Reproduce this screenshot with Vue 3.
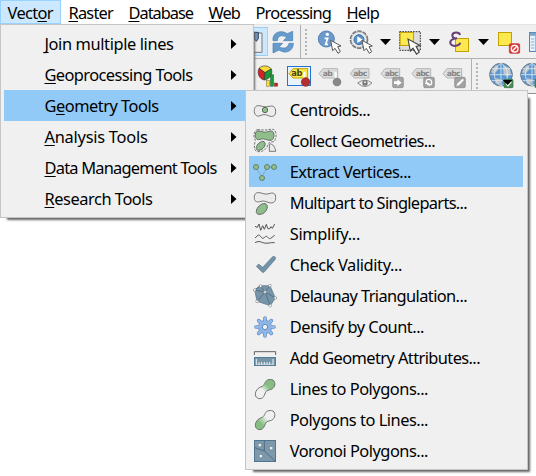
<script setup>
const bar = [
  { t: ['Vect', 'o', 'r'], w: 45, open: true },
  { t: ['', 'R', 'aster'], w: 44 },
  { t: ['', 'D', 'atabase'], w: 64 },
  { t: ['', 'W', 'eb'], w: 31 },
  { t: ['Pro', 'c', 'essing'], w: 75 },
  { t: ['', 'H', 'elp'], w: 32 },
]
const vector = [
  { t: ['', 'J', 'oin multiple lines'], w: 129 },
  { t: ['', 'G', 'eoprocessing Tools'], w: 148 },
  { t: ['G', 'e', 'ometry Tools'], w: 114, on: true },
  { t: ['', 'A', 'nalysis Tools'], w: 103 },
  { t: ['', 'D', 'ata Management Tools'], w: 172 },
  { t: ['', 'R', 'esearch Tools'], w: 108 },
]
const G = 'fill="#8fbd8c" stroke="#626a64" stroke-width="3"'
const W = 'fill="#ececec" stroke="#777" stroke-width="3"'
const dot = (x, y) => `<circle cx="${x}" cy="${y}" r="7.5" fill="#8fc08c" stroke="#64806a" stroke-width="3"/>`
const node = (x, y) => `<circle cx="${x}" cy="${y}" r="4" fill="#fff" stroke="#888" stroke-width="2"/>`
const tools = [
  { label: 'Centroids...', w: 81, y: 12, icon: `<path d="M42 47C31 46 27 55 28 65C29 78 39 81 48 76C57 72 63 74 70 77C84 83 92 77 92 65C92 50 84 46 72 49C60 53 53 48 42 47Z" ${W}/><circle cx="60" cy="60" r="8" fill="#8fc08c" stroke="#56705c" stroke-width="3"/>` },
  { label: 'Collect Geometries...', w: 146, y: 105, icon: `<path d="M39 119C25 120 24 142 31 151C28 164 25 176 34 184C48 188 63 181 68 166C70 158 76 155 86 155C94 151 96 126 88 120C79 114 70 121 60 120Z" fill="none" stroke="#555" stroke-width="2.5" stroke-dasharray="7 4"/><path d="M43 123C31 122 29 133 32 143C35 151 43 149 50 147C58 145 65 151 75 151C86 151 88 139 86 129C83 120 74 123 65 126C57 128 51 124 43 123Z" ${G}/><path d="M57 155C48 151 35 163 34 173C33 181 40 183 48 179C57 176 66 160 57 155Z" ${G}/><path d="M73 162V184H92C91 173 84 160 73 162Z" ${W}/>` },
  { label: 'Extract Vertices...', w: 122, y: 198, on: true, icon: `<path d="M36 238L48 257M62 239L53 256" stroke="#7294ac" stroke-width="3" stroke-dasharray="5 3"/><path d="M73 231H80" stroke="#7294ac" stroke-width="3"/>${dot(33, 231)}${dot(66, 231)}${dot(87, 231)}${dot(51, 264)}` },
  { label: 'Multipart to Singleparts...', w: 178, y: 291, icon: `<path d="M42 308C31 306 27 316 28 325C29 337 39 337 48 334C57 331 63 335 72 338C86 341 92 335 92 323C92 309 84 307 72 311C60 315 53 309 42 308Z" ${W}/><path d="M61 341C49 338 35 352 34 364C33 373 42 375 53 371C65 366 73 346 61 341Z" ${G}/>` },
  { label: 'Simplify...', w: 71, y: 9, icon: `<path d="M30 34L37 37L42 27L47 46L53 32L58 43L64 28L68 40L73 42L78 35L82 40L89 27" fill="none" stroke="#555" stroke-width="3"/><path d="M30 69L39 61C42 58 45 62 49 67C55 75 59 64 64 64C69 64 70 74 77 70L89 61" fill="none" stroke="#555" stroke-width="3"/><path d="M30 83C39 78 45 79 53 83C66 88 77 81 89 83" fill="none" stroke="#555" stroke-width="3"/>` },
  { label: 'Check Validity...', w: 113, y: 102, icon: `<path d="M34 154L41 147L53 157L84 124L91 126V133L57 172H52Z" fill="#7493a6" stroke="#587b91" stroke-width="2"/>` },
  { label: 'Delaunay Triangulation...', w: 178, y: 195, icon: `<path d="M29 225L46 212H75L91 249L76 272L36 259Z" fill="#7795a8" stroke="#557083" stroke-width="2"/><path d="M60 231L29 225L46 212L60 231L75 212M60 231L91 249M60 231L76 272M60 231L36 259" fill="none" stroke="#4f6a7d" stroke-width="2.5"/>${node(29, 225)}${node(47, 213)}${node(75, 212)}${node(60, 231)}${node(91, 249)}${node(76, 272)}${node(36, 259)}` },
  { label: 'Densify by Count...', w: 135, y: 288, icon: `<g stroke="#5b8cc8" stroke-width="11" stroke-linecap="round"><path d="M60 309V363M33 336H87M41 317L79 355M79 317L41 355"/></g><circle cx="60" cy="336" r="21" fill="#5b8cc8"/><g stroke="#97bbe8" stroke-width="7" stroke-linecap="round"><path d="M60 309V363M33 336H87M41 317L79 355M79 317L41 355"/></g><circle cx="60" cy="336" r="19" fill="#8eb4e3"/><circle cx="60" cy="336" r="8" fill="#efefef" stroke="#5b8cc8" stroke-width="3"/>` },
  { label: 'Add Geometry Attributes...', w: 191, y: -9, icon: `<path d="M28 30V20H92V30" fill="none" stroke="#626262" stroke-width="3"/><rect x="28.500" y="37.500" width="63" height="24" fill="#7795a8" stroke="#557c95" stroke-width="3"/><path d="M34 42V59M42 51V59M50 51V59M58 51V59M66 51V59M74 51V59M84 42V59" stroke="#eef2f5" stroke-width="3"/><path d="M33 58H87" stroke="#eef2f5" stroke-width="2"/>` },
  { label: 'Lines to Polygons...', w: 139, y: 84, icon: `<path d="M72 104C59 105 61 119 52 124C38 128 28 140 32 153C37 164 53 164 58 151C62 140 64 136 76 134C88 131 93 118 87 108C83 103 78 103 72 104Z" fill="url(#gu)" stroke="#6c756e" stroke-width="3"/>` },
  { label: 'Polygons to Lines...', w: 139, y: 177, icon: `<path d="M72 197C59 198 61 212 52 217C38 221 28 233 32 246C37 257 53 257 58 244C62 233 64 229 76 227C88 224 93 211 87 201C83 196 78 196 72 197Z" fill="url(#gd)" stroke="#6c756e" stroke-width="3"/>` },
  { label: 'Voronoi Polygons...', w: 139, y: 270, icon: `<rect x="28.500" y="286.500" width="63" height="63" fill="#7c98aa" stroke="#4f7590" stroke-width="3"/><path d="M58 288V318L29 308M58 318L91 349" fill="none" stroke="#4f6c82" stroke-width="3"/><path d="M41 297h7v7h-7zM75 306h7v7h-7zM44 330h7v7h-7z" fill="#f2eee5"/>` },
]

// Spread the glyphs so that each label takes its nominal width.
const vFit = {
  mounted(el, { value }) {
    const n = el.textContent.length
    el.style.letterSpacing = (value - el.getBoundingClientRect().width) / n + 'px'
  },
}

const cursor = 'M0 0L6 31L13 24L22 39L29 34L21 19L31 17Z'
const tag = 'M0 17L12 2H56V30H12Z'
</script>

<template>
  <div class="window">
    <nav class="menubar">
      <div v-for="m in bar" :key="m.t.join('')" class="top" :class="{ open: m.open }" :style="{ width: m.w + 16 + 'px' }">
        <span v-fit="m.w + 0.5" class="label">{{ m.t[0] }}<u>{{ m.t[1] }}</u>{{ m.t[2] }}</span>
      </div>
    </nav>

    <div class="toolbars">
      <div class="toolbar">
        <svg class="half" viewBox="24 75 45 102">
          <rect x="20" y="82.500" width="48" height="84" fill="#cce8ff" stroke="#99cdf2" stroke-width="3" />
          <path d="M20 99H51V157H20" fill="#eee" stroke="#777" stroke-width="3" />
          <path d="M28 97H40V116L34 124L28 116Z" fill="#6b93c4" stroke="#33435c" stroke-width="3" />
        </svg>
        <svg class="cell" viewBox="69 75 93 102">
          <g fill="#669bce" stroke="#477bad" stroke-width="2">
            <path d="M84 122C81 99 105 87 127 101L143 94V122H115L125 112C110 103 98 108 97 122Z" />
            <path d="M145 130C145 153 123 164 102 150L84 159V130H113L103 140C116 149 130 143 132 130Z" />
          </g>
        </svg>
        <i class="rule" /><i class="grip" />
        <svg class="cell" viewBox="210 75 93 102">
          <circle cx="244" cy="117" r="24" fill="#6c9bcb" stroke="#5581b4" stroke-width="3" />
          <circle cx="247" cy="103" r="5" fill="#fff" /><path d="M239 115H248L242 133H249" fill="none" stroke="#fff" stroke-width="5" />
          <path :d="cursor" transform="translate(257 121)" fill="#fff" stroke="#555" stroke-width="3" />
        </svg>
        <svg class="cell" viewBox="303 75 93 102">
          <circle cx="342" cy="119" r="25" fill="#eee" stroke="#777" stroke-width="6" stroke-dasharray="13 3" />
          <circle cx="342" cy="119" r="23" fill="#eee" stroke="#aaa" stroke-width="2" />
          <circle cx="342" cy="119" r="15" fill="#5b91c5" stroke="#376fa6" stroke-width="3" />
          <path d="M337 109L353 119L337 129Z" fill="#fff" />
          <path :d="cursor" transform="translate(351 121)" fill="#fff" stroke="#555" stroke-width="3" />
        </svg>
        <svg class="arrow" viewBox="0 0 17 34"><path d="M3 14H14L8.500 20Z" /></svg>
        <svg class="cell" viewBox="24 75 93 102">
          <rect x="41" y="95" width="62" height="56" fill="#ddd" stroke="#333" stroke-width="3" stroke-dasharray="5 3" />
          <rect x="42.500" y="97.500" width="40" height="39" fill="#fce94f" stroke="#c4a000" stroke-width="3" />
          <path :d="cursor" transform="translate(66 117) scale(1.16)" fill="#fff" stroke="#444" stroke-width="3" />
        </svg>
        <svg class="arrow wide" viewBox="0 0 18 34"><path d="M4 14H15L9.500 20Z" /></svg>
        <svg class="cell" viewBox="171 75 93 102">
          <rect x="208.500" y="115.500" width="39" height="39" fill="#fce94f" stroke="#c4a000" stroke-width="3" />
          <path d="M222 105C220 95 201 95 199 105C198 113 206 116 213 115C197 115 190 124 194 132C200 142 220 138 223 128" fill="none" stroke="#6a3f75" stroke-width="6" />
        </svg>
        <svg class="arrow wide" viewBox="0 0 18 34"><path d="M4 14H15L9.500 20Z" /></svg>
        <svg class="cell" viewBox="318 75 93 102">
          <rect x="337.500" y="97.500" width="39" height="39" fill="#fce94f" stroke="#c4a000" stroke-width="3" />
          <rect x="370" y="131" width="31" height="29" rx="4" fill="#dc4040" stroke="#bd2525" stroke-width="2" />
          <circle cx="386" cy="146" r="10" fill="none" stroke="#fff" stroke-width="4" /><path d="M379 153L393 139" stroke="#fff" stroke-width="4" />
        </svg>
        <svg class="cell" viewBox="411 75 93 102">
          <rect x="430.500" y="97.500" width="60" height="57" fill="#e7f1fa" stroke="#5583b0" stroke-width="3" />
          <path d="M431 103H490" stroke="#7da5cc" stroke-width="9" /><path d="M435 117H445M435 126H445M435 135H445M435 144H445M449 108V154" stroke="#8db0d1" stroke-width="3" />
        </svg>
      </div>

      <div class="toolbar second">
        <svg class="cell" viewBox="24 177 93 102">
          <g stroke="#333" stroke-width="2"><path d="M60 218L42 205C51 195 69 195 79 207Z" fill="#fcdc37" /><path d="M60 218L42 205C35 220 43 238 58 240Z" fill="#d92020" /><path d="M60 218L79 207C84 220 76 237 58 240Z" fill="#169b35" /></g>
          <g stroke="#333" stroke-width="1"><rect x="64" y="242" width="10" height="17" fill="#fcdc37" /><rect x="76" y="224" width="10" height="35" fill="#169b35" /><rect x="88" y="249" width="10" height="10" fill="#d92020" /></g>
        </svg>
        <svg class="cell" viewBox="117 177 93 102">
          <rect x="127.500" y="199.500" width="69" height="57" fill="#e9f3fb" stroke="#1f74d4" stroke-width="3" />
          <path :d="tag" transform="translate(132 204)" fill="#fce94f" stroke="#c4a000" stroke-width="3" />
          <text x="139" y="228" class="ab">ab</text><path d="M178 216V239" stroke="#fff" stroke-width="6" /><circle cx="182" cy="246" r="13" fill="#b52d2d" stroke="#8e2323" stroke-width="2" />
        </svg>
        <svg class="cell" viewBox="210 177 93 102">
          <path :d="tag" transform="translate(222 204)" class="tag" /><text x="233" y="228" class="ab grey">ab</text>
          <path d="M272 216V239" stroke="#fff" stroke-width="6" /><circle cx="276" cy="246" r="13" fill="#888" />
        </svg>
        <svg class="cell" viewBox="303 177 93 102">
          <path :d="tag" transform="translate(316 204)" class="tag" /><text x="325" y="227" class="ab grey">abc</text>
          <path d="M338 249Q360 232 381 249Q360 270 338 249Z" fill="#eee" stroke="#888" stroke-width="3" /><circle cx="360" cy="249" r="8" fill="#777" /><circle cx="360" cy="247" r="3" fill="#eee" />
        </svg>
        <svg v-for="k in 3" :key="k" class="cell" viewBox="303 177 93 102">
          <path :d="tag" transform="translate(315 204)" class="tag" /><text x="326" y="227" class="ab grey">abc</text>
          <rect x="350" y="232" width="32" height="31" rx="4" fill="#a2a2a2" stroke="#888" stroke-width="2" />
          <path v-if="k === 1" d="M354 244H364V238L377 248L364 258V252H354Z" fill="#fff" />
          <path v-else-if="k === 2" d="M358 248C354 236 374 234 374 247C374 257 362 258 361 248M361 248L355 252M361 248L367 253" fill="none" stroke="#fff" stroke-width="4" />
          <path v-else d="M355 259L359 250L374 236L378 240L364 255Z" fill="#fff" />
        </svg>
        <i class="rule" /><i class="grip" />
        <svg v-for="k in 2" :key="'g' + k" class="cell" viewBox="300 177 93 102">
          <circle cx="345" cy="224" r="34" fill="#5d98d3" stroke="#6b7680" stroke-width="3" />
          <path d="M326 199C335 190 339 200 335 211L324 222L315 216ZM351 195L370 204L375 220L363 231L352 220ZM331 234L345 239L341 254L328 250Z" fill="#c2c6c5" />
          <path d="M345 190V258M312 224H378M317 206H373M317 242H373M345 190C319 204 319 244 345 258M345 190C371 204 371 244 345 258" fill="none" stroke="#dde8f2" stroke-width="2.500" />
          <rect x="354" y="238" width="27" height="25" rx="3" fill="#4b8d54" stroke="#2f6940" stroke-width="2" />
          <path d="M360 250L366 257L376 245" fill="none" stroke="#fff" stroke-width="4" /><path v-if="k === 1" d="M350 240H379L365 255Z" fill="#000" />
        </svg>
      </div>
    </div>

    <div class="menu main">
      <div v-for="m in vector" :key="m.t.join('')" class="item" :class="{ on: m.on }">
        <span v-fit="m.w" class="label">{{ m.t[0] }}<u>{{ m.t[1] }}</u>{{ m.t[2] }}</span>
        <svg class="more" viewBox="0 0 6 10"><path d="M0 0L5.500 5L0 10Z" /></svg>
      </div>
    </div>

    <div class="menu sub">
      <div v-for="m in tools" :key="m.label" class="item" :class="{ on: m.on }">
        <svg class="icon" :viewBox="`12 ${m.y} 99 93`" v-html="m.icon" />
        <span v-fit="m.w - 0.7" class="label">{{ m.label }}</span>
      </div>
    </div>

    <svg class="defs">
      <linearGradient id="gu" x1="0" y1="1" x2="1" y2="0"><stop offset=".4" stop-color="#f0f0f0" /><stop offset=".65" stop-color="#86bd82" /></linearGradient>
      <linearGradient id="gd" x1="0" y1="1" x2="1" y2="0"><stop offset=".3" stop-color="#86bd82" /><stop offset=".6" stop-color="#f0f0f0" /></linearGradient>
    </svg>
  </div>
</template>

<style>
body { margin: 0; background: #fff; }
</style>

<style scoped>
.window { position: relative; width: 536px; height: 476px; overflow: hidden; background: #fff; font: 16.4px/24px "Noto Sans", sans-serif; color: #000; }
.menubar { display: flex; height: 24px; }
.top { box-sizing: border-box; height: 24px; padding-left: 7.5px; line-height: 26px; flex: none; }
.top.open { background: #cce8ff; box-shadow: inset 0 0 0 1px #99d1ff; }
.label { display: inline-block; white-space: pre; flex: none; }
u { text-decoration-thickness: 1px; text-underline-offset: 2px; text-decoration-skip-ink: none; }
.toolbars { box-sizing: border-box; height: 70px; padding-left: 253px; background: #f0f0f0; border-top: 1px solid #e3e3e3; border-bottom: 1px solid #929292; overflow: hidden; }
.toolbar { display: flex; box-sizing: border-box; height: 34px; border-bottom: 1px solid #b0b0b0; }
.toolbar.second { border: 0; }
.toolbar svg { flex: none; height: 34px; }
.cell { width: 31px; }
.half { width: 15px; }
.arrow { width: 17px; }
.arrow.wide { width: 18px; }
.rule { width: 1px; height: 34px; margin-left: 1px; background: #b0b0b0; flex: none; }
.grip { width: 2px; height: 27px; margin: 4px 8px 0 4px; flex: none; background: repeating-linear-gradient(#b5b5b5 0 2px, transparent 2px 4px); }
.tag { fill: #ddd; stroke: #b5b5b5; stroke-width: 3px; }
.ab { font: bold 25px "DejaVu Sans", sans-serif; fill: #4a4212; letter-spacing: -1px; }
.ab.grey { font-size: 23px; fill: #858585; letter-spacing: -2px; }
.menu { position: absolute; box-sizing: border-box; border: 1px solid #c6c6c6; background: #f0f0f0; padding: 3px; box-shadow: 5px 5px 2px -3px #666; }
.main { left: 0; top: 24px; width: 254px; height: 194px; box-shadow: 4px 5px 2px -3px #666; }
.sub { left: 245px; top: 90px; width: 283px; height: 380px; padding-right: 4px; }
.item { display: flex; align-items: center; height: 31px; line-height: 31px; }
.item.on { background: #91c9f7; }
.main .item { padding: 0 13px 0 40.5px; justify-content: space-between; }
.more { width: 6px; height: 10px; }
.icon { width: 33px; height: 31px; margin-right: 7.7px; flex: none; }
.defs { position: absolute; width: 0; height: 0; }
</style>
